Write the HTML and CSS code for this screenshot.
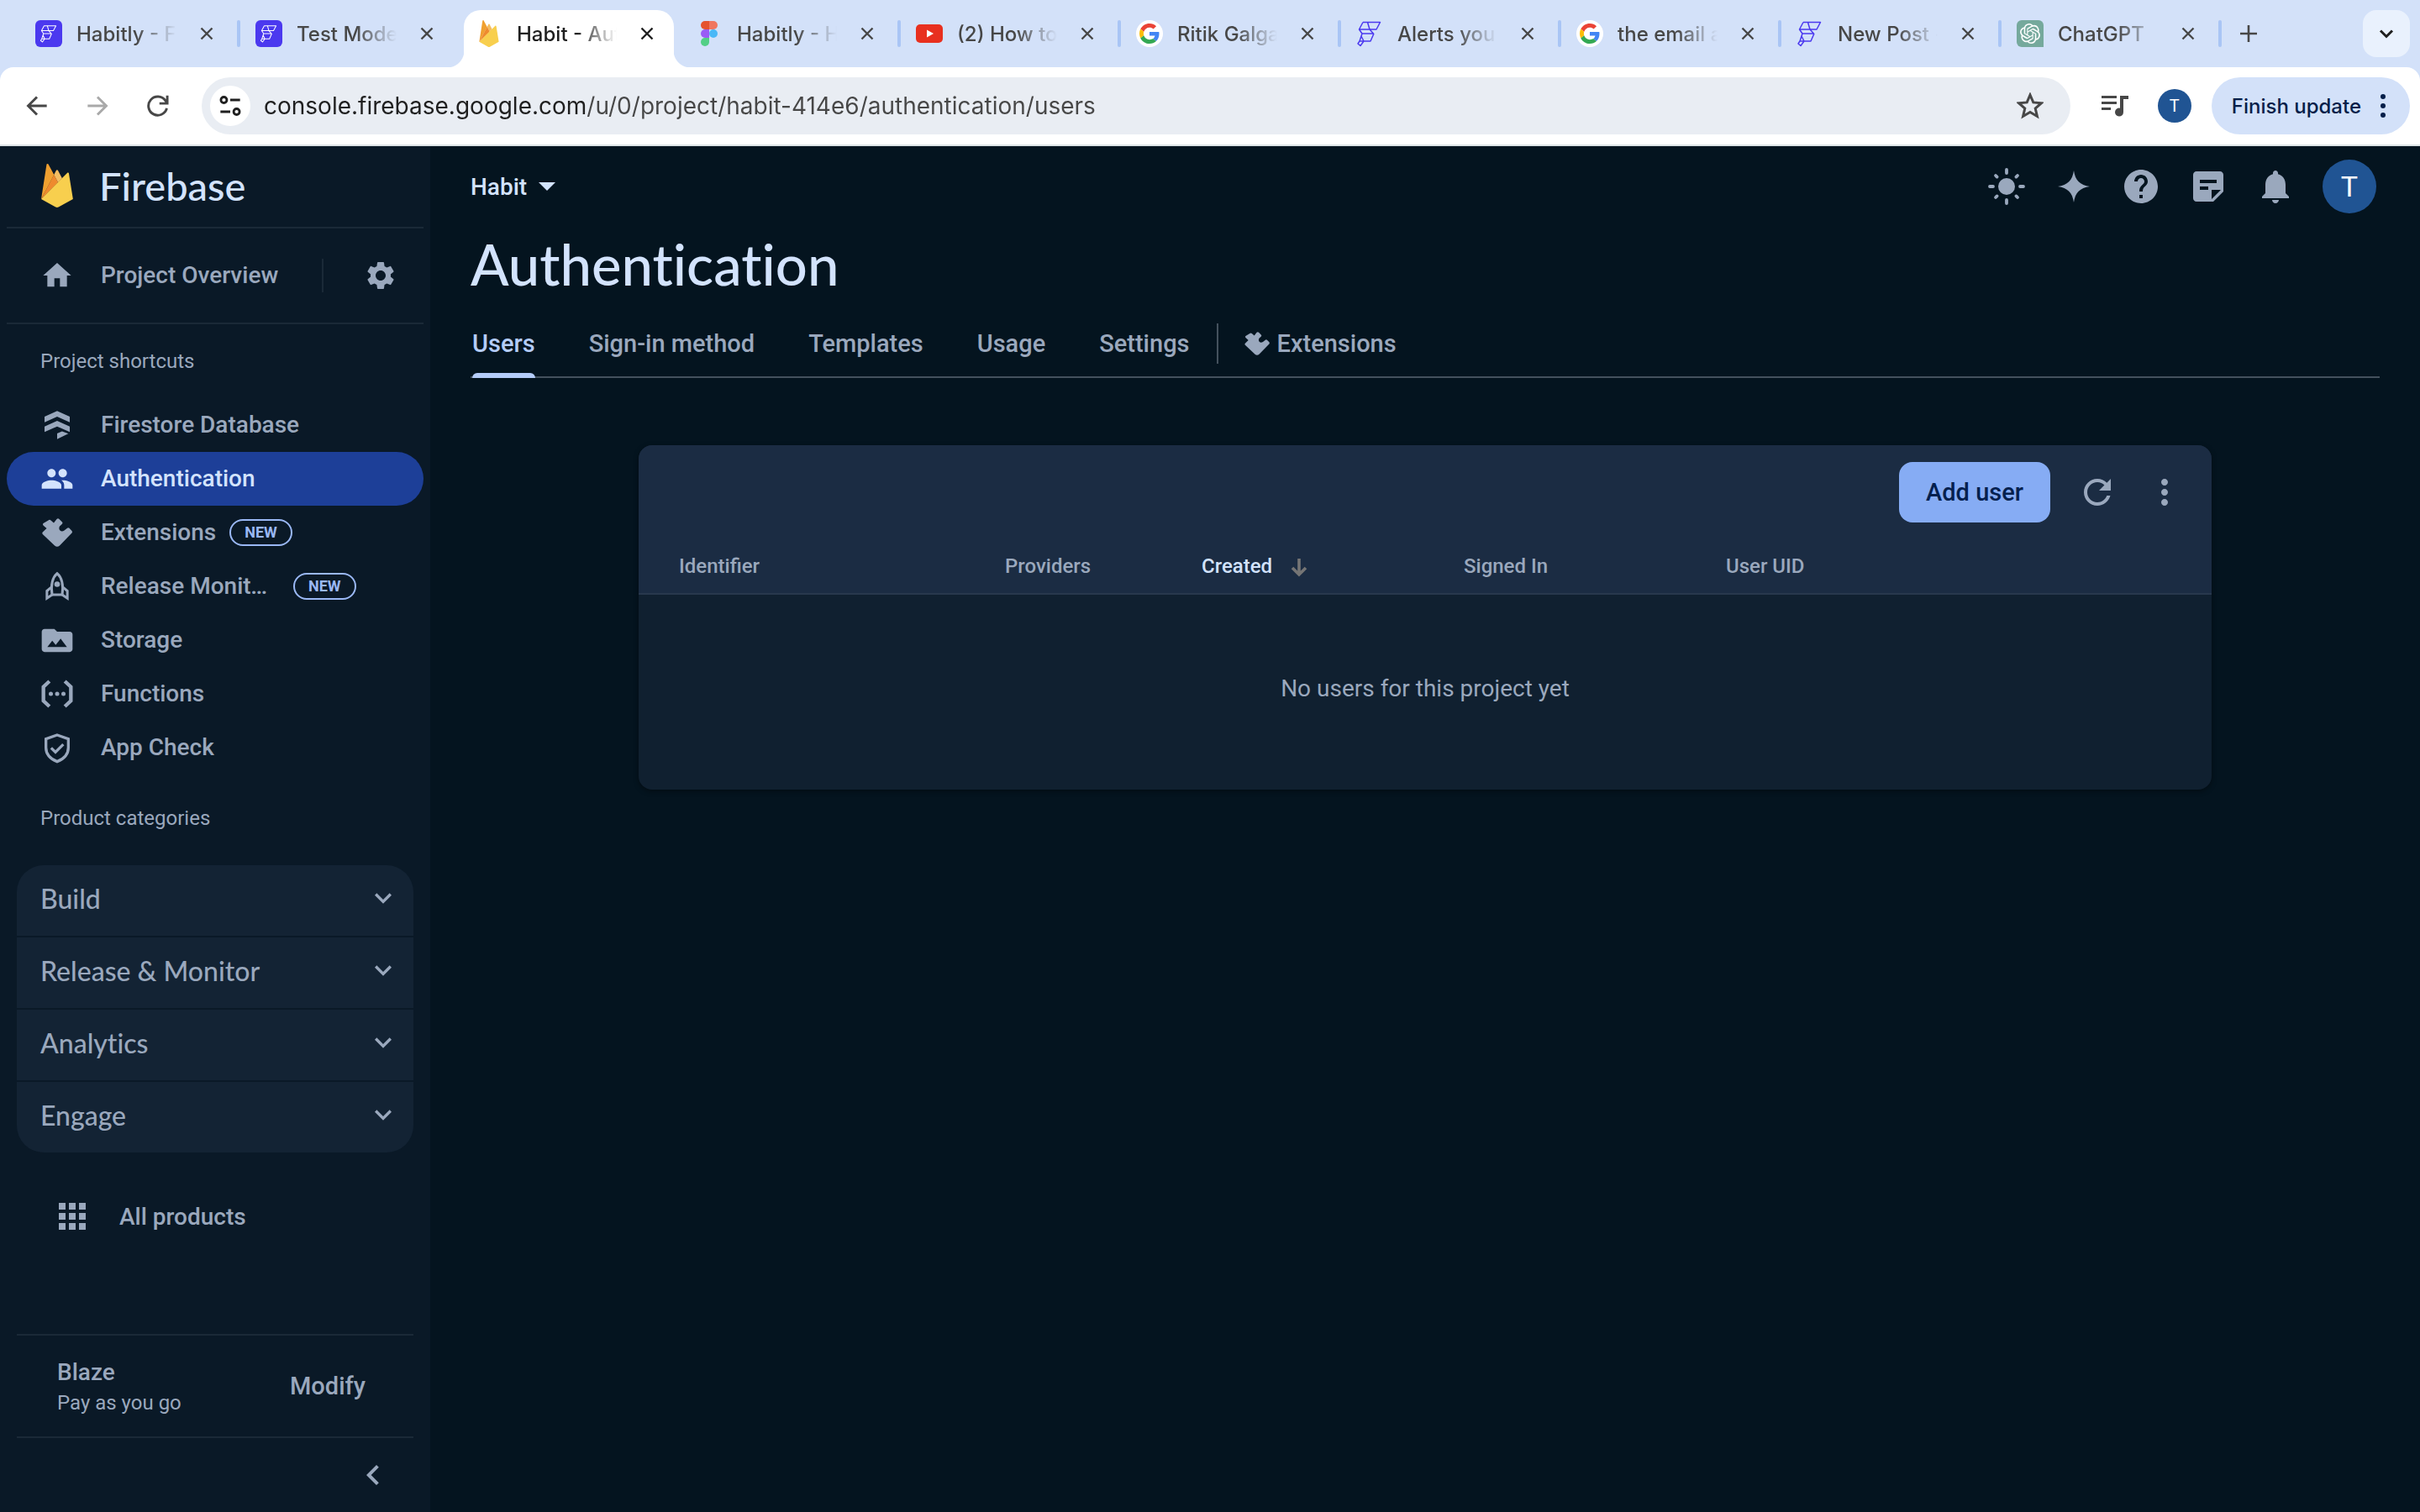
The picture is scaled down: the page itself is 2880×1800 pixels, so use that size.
FILE: index.html
```
<!DOCTYPE html>
<html lang="en">
<head>
    <meta charset="UTF-8">
    <meta name="viewport" content="width=device-width, initial-scale=1.0">
    <title>Habit - Authentication - Firebase console</title>
    <link rel="stylesheet" href="styles.css">
</head>
<body>
    <!-- Shared icon shapes -->
    <svg class="sprite" aria-hidden="true">
        <symbol id="i-close" viewBox="0 0 16 16"><path d="M1.5 1.5l13 13M14.5 1.5l-13 13" fill="none" stroke="currentColor" stroke-width="2.4"/></symbol>
        <symbol id="i-flutterflow" viewBox="0 0 32 32"><path d="M8 2.500H28.500L24 11H16L13.500 2.500M8 2.500L3.500 11H16L20.500 16H7L3.500 11M7 16L4 25H17L21 16M4 25L2 28 5 30.500 9 25 6 19" fill="none" stroke="currentColor" stroke-width="1.500" stroke-linejoin="round"/></symbol>
        <symbol id="i-firebase" viewBox="0 0 256 351">
            <path fill="#f0a030" d="M0 283l2.100-3L102.500 89.500l.2-2L58.500 4.400C54.800-2.600 44.300-.8 43.100 7z"/>
            <path fill="#f4bd62" d="M135 150.400l33-33.800-33-62.900c-3.100-6-11.900-6-15 0l-17.600 33.600v2.900z"/>
            <path fill="#ee8a2e" d="M0 283l1-1 3.500-1.400 128.400-128 1.700-4.400-32.100-61z"/>
            <path fill="#f8cf4e" d="M139.100 347.600l116.300-64.900L222.200 78.200c-1-6.400-8.900-8.900-13.500-4.300L0 283l115.600 64.500a24 24 0 0 0 23.500.1"/>
        </symbol>
        <symbol id="i-google" viewBox="0 0 48 48">
            <path fill="#ea4335" d="M24 9.500c3.540 0 6.710 1.220 9.210 3.600l6.850-6.850C35.900 2.380 30.470 0 24 0 14.620 0 6.510 5.380 2.560 13.220l7.980 6.190C12.430 13.720 17.740 9.500 24 9.500z"/>
            <path fill="#4285f4" d="M46.980 24.550c0-1.570-.15-3.090-.38-4.550H24v9.020h12.940c-.58 2.960-2.260 5.480-4.780 7.180l7.730 6c4.510-4.180 7.090-10.360 7.090-17.650z"/>
            <path fill="#fbbc05" d="M10.530 28.590c-.48-1.450-.76-2.990-.76-4.590s.27-3.140.76-4.590l-7.980-6.190C.92 16.460 0 20.120 0 24c0 3.880.92 7.540 2.560 10.780z"/>
            <path fill="#34a853" d="M24 48c6.480 0 11.930-2.130 15.890-5.810l-7.730-6c-2.150 1.450-4.920 2.300-8.160 2.300-6.260 0-11.570-4.220-13.470-9.910l-7.980 6.190C6.510 42.620 14.620 48 24 48z"/>
        </symbol>
        <symbol id="i-extension" viewBox="0 0 36 34"><path d="M7.500 2.500q1.500-1.300 3 0l3.500 3 3.500-4.500q1.500-1.500 3 0l3.500 3.500q1 1.300-.3 2.500l-2.700 2.500q-1.500 3 .5 5 2 2 5 0l3.500-2.800q1.300-1 2.500 0l3 3.300q1 1.300 0 2.500L21 32.500q-3 2.500-6 0L.8 19q-1-1.200 0-2.400L5.500 12 1.500 8.500q-1-1.200 0-2.400z"/></symbol>
        <symbol id="i-more" viewBox="0 0 24 24"><path d="M12 8c1.100 0 2-.9 2-2s-.9-2-2-2-2 .9-2 2 .9 2 2 2zm0 2c-1.100 0-2 .9-2 2s.9 2 2 2 2-.9 2-2-.9-2-2-2zm0 6c-1.100 0-2 .9-2 2s.9 2 2 2 2-.9 2-2-.9-2-2-2z"/></symbol>
        <symbol id="i-expand" viewBox="0 0 24 24"><path d="M16.590 8.590L12 13.170 7.410 8.590 6 10l6 6 6-6z"/></symbol>
    </svg>

    <div class="browser">
        <div class="tab-strip">
            <div class="tab">
                <span class="favicon favicon-purple"><svg><use href="#i-flutterflow"/></svg></span>
                <span class="tab-title">Habitly - FlutterFlow</span>
                <button class="tab-close" aria-label="Close tab"><svg><use href="#i-close"/></svg></button>
            </div>
            <div class="tab no-line">
                <span class="favicon favicon-purple"><svg><use href="#i-flutterflow"/></svg></span>
                <span class="tab-title">Test Mode</span>
                <button class="tab-close" aria-label="Close tab"><svg><use href="#i-close"/></svg></button>
            </div>
            <div class="tab active no-line">
                <span class="favicon"><svg><use href="#i-firebase"/></svg></span>
                <span class="tab-title">Habit - Authentication</span>
                <button class="tab-close" aria-label="Close tab"><svg><use href="#i-close"/></svg></button>
            </div>
            <div class="tab">
                <span class="favicon"><svg viewBox="0 0 32 32">
                    <path fill="#e5532d" d="M16 1h-5a5 5 0 0 0 0 10h5z"/>
                    <path fill="#f0765f" d="M16 1h5a5 5 0 0 1 0 10h-5z"/>
                    <path fill="#9a5cf5" d="M16 11h-5a5 5 0 0 0 0 10h5z"/>
                    <circle fill="#4ab8f7" cx="21" cy="16" r="5"/>
                    <path fill="#52cf86" d="M16 21h-5a5 5 0 1 0 5 5z"/>
                </svg></span>
                <span class="tab-title">Habitly - Habit</span>
                <button class="tab-close" aria-label="Close tab"><svg><use href="#i-close"/></svg></button>
            </div>
            <div class="tab">
                <span class="favicon"><svg viewBox="0 0 32 32"><rect fill="#e8301f" y="5" width="32" height="22" rx="5"/><path fill="#fff" d="M13 11.500l8 4.500-8 4.500z"/></svg></span>
                <span class="tab-title">(2) How to build</span>
                <button class="tab-close" aria-label="Close tab"><svg><use href="#i-close"/></svg></button>
            </div>
            <div class="tab">
                <span class="favicon favicon-round"><svg><use href="#i-google"/></svg></span>
                <span class="tab-title">Ritik Galgate</span>
                <button class="tab-close" aria-label="Close tab"><svg><use href="#i-close"/></svg></button>
            </div>
            <div class="tab">
                <span class="favicon favicon-plain"><svg><use href="#i-flutterflow"/></svg></span>
                <span class="tab-title">Alerts you</span>
                <button class="tab-close" aria-label="Close tab"><svg><use href="#i-close"/></svg></button>
            </div>
            <div class="tab">
                <span class="favicon favicon-round"><svg><use href="#i-google"/></svg></span>
                <span class="tab-title">the email address</span>
                <button class="tab-close" aria-label="Close tab"><svg><use href="#i-close"/></svg></button>
            </div>
            <div class="tab">
                <span class="favicon favicon-plain"><svg><use href="#i-flutterflow"/></svg></span>
                <span class="tab-title">New Post -</span>
                <button class="tab-close" aria-label="Close tab"><svg><use href="#i-close"/></svg></button>
            </div>
            <div class="tab">
                <span class="favicon favicon-gpt"><svg viewBox="0 0 24 24"><path d="M22.2819 9.8211a5.9847 5.9847 0 0 0-.5157-4.9108 6.0462 6.0462 0 0 0-6.5098-2.9A6.0651 6.0651 0 0 0 4.9807 4.1818a5.9847 5.9847 0 0 0-3.9977 2.9 6.0462 6.0462 0 0 0 .7427 7.0966 5.98 5.98 0 0 0 .511 4.9107 6.051 6.051 0 0 0 6.5146 2.9001A5.9847 5.9847 0 0 0 13.2599 24a6.0557 6.0557 0 0 0 5.7718-4.2058 5.9894 5.9894 0 0 0 3.9977-2.9001 6.0557 6.0557 0 0 0-.7475-7.0729zm-9.022 12.6081a4.4755 4.4755 0 0 1-2.8764-1.0408l.1419-.0804 4.7783-2.7582a.7948.7948 0 0 0 .3927-.6813v-6.7369l2.02 1.1686a.071.071 0 0 1 .038.052v5.5826a4.504 4.504 0 0 1-4.4945 4.4944zm-9.6607-4.1254a4.4708 4.4708 0 0 1-.5346-3.0137l.142.0852 4.783 2.7582a.7712.7712 0 0 0 .7806 0l5.8428-3.3685v2.3324a.0804.0804 0 0 1-.0332.0615L9.74 19.9502a4.4992 4.4992 0 0 1-6.1408-1.6464zM2.3408 7.8956a4.485 4.485 0 0 1 2.3655-1.9728V11.6a.7664.7664 0 0 0 .3879.6765l5.8144 3.3543-2.0201 1.1685a.0757.0757 0 0 1-.071 0l-4.8303-2.7865A4.504 4.504 0 0 1 2.3408 7.872zm16.5963 3.8558L13.1038 8.364 15.1192 7.2a.0757.0757 0 0 1 .071 0l4.8303 2.7913a4.4944 4.4944 0 0 1-.6765 8.1042v-5.6772a.79.79 0 0 0-.407-.667zm2.0107-3.0231l-.142-.0852-4.7735-2.7818a.7759.7759 0 0 0-.7854 0L9.409 9.2297V6.8974a.0662.0662 0 0 1 .0284-.0615l4.8303-2.7866a4.4992 4.4992 0 0 1 6.6802 4.66zM8.3065 12.863l-2.02-1.1638a.0804.0804 0 0 1-.038-.0567V6.0742a4.4992 4.4992 0 0 1 7.3757-3.4537l-.142.0805L8.704 5.459a.7948.7948 0 0 0-.3927.6813zm1.0976-2.3654l2.602-1.4998 2.6069 1.4998v2.9994l-2.5974 1.4997-2.6067-1.4997Z"/></svg></span>
                <span class="tab-title">ChatGPT</span>
                <button class="tab-close" aria-label="Close tab"><svg><use href="#i-close"/></svg></button>
            </div>
            <button class="new-tab" aria-label="New tab"><svg viewBox="0 0 20 20"><path d="M10 0v20M0 10h20" fill="none" stroke="currentColor" stroke-width="2.600"/></svg></button>
            <button class="tab-search" aria-label="Search tabs"><svg viewBox="0 0 24 24"><path d="M5 8.500l7 7 7-7" fill="none" stroke="currentColor" stroke-width="3"/></svg></button>
        </div>

        <div class="toolbar">
            <button class="tool" aria-label="Back"><svg viewBox="0 0 24 24"><path d="M22 12H3.500M12 3L3 12l9 9" fill="none" stroke="currentColor" stroke-width="2.500"/></svg></button>
            <button class="tool tool-off" aria-label="Forward"><svg viewBox="0 0 24 24"><path d="M2 12h18.500M12 3l9 9-9 9" fill="none" stroke="currentColor" stroke-width="2.500"/></svg></button>
            <button class="tool" aria-label="Reload"><svg viewBox="0 0 24 24"><path d="M21 14.500A9.500 9.500 0 1 1 19.500 6.500L21 8.500M21.500 1.500v8h-8" fill="none" stroke="currentColor" stroke-width="2.500"/></svg></button>
            <div class="omnibox">
                <button class="site-info" aria-label="Site information"><svg viewBox="0 0 24 24"><g fill="none" stroke="currentColor" stroke-width="2.400"><circle cx="5.500" cy="6" r="3"/><path d="M12 6h10M2 18h10"/><circle cx="18.500" cy="18" r="3"/></g></svg></button>
                <input class="url" type="text" aria-label="Address" value="console.firebase.google.com/u/0/project/habit-414e6/authentication/users">
                <button class="star" aria-label="Bookmark"><svg viewBox="0 0 32 32"><path d="M16 3l3.800 8.900 9.700.8-7.300 6.400 2.200 9.400-8.400-5-8.400 5 2.200-9.400-7.300-6.400 9.700-.8z" fill="none" stroke="currentColor" stroke-width="3"/></svg></button>
            </div>
            <button class="media" aria-label="Media"><svg viewBox="0 0 32 28"><path d="M0 3.500h18M0 10.500h18M0 17.500h11" fill="none" stroke="currentColor" stroke-width="3.200"/><path d="M22 2h10v4h-6v15.500a5 5 0 1 1-4-4.800z"/></svg></button>
            <button class="chrome-avatar" aria-label="Profile">T</button>
            <button class="update">Finish update <svg viewBox="0 0 8 28"><circle cx="4" cy="3" r="3"/><circle cx="4" cy="14" r="3"/><circle cx="4" cy="25" r="3"/></svg></button>
        </div>
    </div>

    <div class="console">
        <nav class="sidebar">
            <a class="brand" href="#">
                <svg><use href="#i-firebase"/></svg>
                <span>Firebase</span>
            </a>

            <div class="overview">
                <a class="nav-item" href="#">
                    <svg class="icon" viewBox="0 0 24 24"><path d="M10 20v-6h4v6h5v-8h3L12 3 2 12h3v8z"/></svg>
                    <span>Project Overview</span>
                </a>
                <button class="gear" aria-label="Project settings"><svg class="icon" viewBox="0 0 24 24"><path d="M19.140 12.940c.04-.3.060-.61.060-.94 0-.32-.02-.64-.07-.94l2.030-1.580c.18-.14.230-.41.120-.61l-1.920-3.320c-.12-.22-.37-.29-.59-.22l-2.390.96c-.5-.38-1.030-.7-1.620-.94l-.36-2.540c-.04-.24-.24-.41-.48-.41h-3.840c-.24 0-.43.17-.47.41l-.36 2.540c-.59.24-1.130.57-1.620.94l-2.390-.96c-.22-.08-.47 0-.59.22L2.740 8.870c-.12.21-.08.470.12.610l2.030 1.580c-.05.3-.09.630-.09.940s.02.640.07.940l-2.030 1.580c-.18.140-.23.410-.12.610l1.920 3.320c.12.220.370.290.590.220l2.390-.96c.5.380 1.030.7 1.620.940l.36 2.540c.05.240.240.410.480.410h3.840c.24 0 .44-.17.470-.41l.36-2.540c.59-.24 1.130-.56 1.620-.94l2.390.96c.22.080.470 0 .59-.22l1.920-3.320c.12-.22.070-.47-.12-.61zM12 15.600c-1.980 0-3.600-1.620-3.600-3.600s1.620-3.600 3.600-3.600 3.600 1.620 3.600 3.600-1.620 3.600-3.600 3.600z"/></svg></button>
            </div>

            <h2 class="section-label">Project shortcuts</h2>
            <a class="nav-item" href="#">
                <svg class="icon" viewBox="0 0 24 24"><path d="M12 2l9 4v4l-9-4-9 4V6zM12 9l9 4v4l-9-4-9 4v-4zM12 18l3.500-1.500L20 18.200 12 22z"/></svg>
                <span>Firestore Database</span>
            </a>
            <a class="nav-item selected" href="#">
                <svg class="icon" viewBox="0 0 24 24"><path d="M16 11c1.660 0 2.990-1.340 2.990-3S17.660 5 16 5c-1.660 0-3 1.340-3 3s1.340 3 3 3zm-8 0c1.660 0 2.990-1.340 2.990-3S9.660 5 8 5C6.340 5 5 6.340 5 8s1.340 3 3 3zm0 2c-2.330 0-7 1.170-7 3.500V19h14v-2.500c0-2.330-4.670-3.500-7-3.500zm8 0c-.29 0-.62.020-.97.050 1.160.84 1.970 1.970 1.970 3.450V19h6v-2.500c0-2.330-4.670-3.500-7-3.500z"/></svg>
                <span>Authentication</span>
            </a>
            <a class="nav-item" href="#">
                <svg class="icon icon-ext"><use href="#i-extension"/></svg>
                <span>Extensions</span>
                <em class="badge">NEW</em>
            </a>
            <a class="nav-item" href="#">
                <svg class="icon" viewBox="0 0 24 24"><g fill="none" stroke="currentColor" stroke-width="1.800"><path d="M12 2.800c-3.500 3-4.600 8-3.600 15.200h7.200C16.600 10.800 15.500 5.800 12 2.800z"/><path d="M8 12.500l-3.300 2.800v5.200l3.700-2.500M16 12.500l3.300 2.800v5.200l-3.700-2.500"/></g><circle cx="12" cy="10.500" r="2"/></svg>
                <span class="cut">Release Monitoring</span>
                <em class="badge">NEW</em>
            </a>
            <a class="nav-item" href="#">
                <svg class="icon" viewBox="0 0 24 24"><path d="M21 6h-9l-2-2H3c-1.100 0-2 .9-2 2v12.500c0 1.100.9 2 2 2h18c1.100 0 2-.9 2-2V8c0-1.100-.9-2-2-2zM5 17l3.500-4.500 2.500 3 3.500-4.500 4.500 6z"/></svg>
                <span>Storage</span>
            </a>
            <a class="nav-item" href="#">
                <svg class="icon" viewBox="0 0 24 24"><path d="M6.500 3L2.200 7v10l4.300 4M17.500 3l4.300 4v10l-4.300 4" fill="none" stroke="currentColor" stroke-width="2.600"/><circle cx="7.500" cy="12" r="1.500"/><circle cx="12" cy="12" r="1.500"/><circle cx="16.500" cy="12" r="1.500"/></svg>
                <span>Functions</span>
            </a>
            <a class="nav-item" href="#">
                <svg class="icon" viewBox="0 0 24 24"><g fill="none" stroke="currentColor" stroke-width="2"><path d="M12 3l8 2.800v6.200c0 4.600-3 8-8 10-5-2-8-5.400-8-10V5.800z"/><path d="M7.700 12.200l3.100 3.100 5.600-5.600"/></g></svg>
                <span>App Check</span>
            </a>

            <h2 class="section-label">Product categories</h2>
            <div class="categories">
                <button class="category">Build <svg class="icon"><use href="#i-expand"/></svg></button>
                <button class="category">Release &amp; Monitor <svg class="icon"><use href="#i-expand"/></svg></button>
                <button class="category">Analytics <svg class="icon"><use href="#i-expand"/></svg></button>
                <button class="category">Engage <svg class="icon"><use href="#i-expand"/></svg></button>
            </div>

            <a class="all-products" href="#">
                <svg viewBox="0 0 24 24"><path d="M4 8h4V4H4v4zm6 12h4v-4h-4v4zm-6 0h4v-4H4v4zm0-6h4v-4H4v4zm6 0h4v-4h-4v4zm6-10v4h4V4h-4zm-6 4h4V4h-4v4zm6 6h4v-4h-4v4zm0 6h4v-4h-4v4z"/></svg>
                <span>All products</span>
            </a>

            <div class="plan">
                <div>
                    <p class="plan-name">Blaze</p>
                    <p class="plan-note">Pay as you go</p>
                </div>
                <button class="modify">Modify</button>
            </div>
            <div class="collapse">
                <button aria-label="Collapse menu"><svg viewBox="0 0 24 24"><path d="M15.410 7.410L14 6l-6 6 6 6 1.410-1.410L10.830 12z"/></svg></button>
            </div>
        </nav>

        <main class="main">
            <header class="topbar">
                <button class="project">Habit <svg viewBox="0 0 20 10"><path d="M0 0h20L10 10z"/></svg></button>
                <div class="top-icons">
                    <button aria-label="Theme"><svg viewBox="0 0 24 24"><circle cx="12" cy="12" r="5"/><path d="M12 2v2M12 20v2M2 12h2M20 12h2M5.500 5.500l.8.8M17.700 17.700l.8.8M5.500 18.500l.8-.8M17.700 6.300l.8-.8" fill="none" stroke="currentColor" stroke-width="1.900" stroke-linecap="round"/></svg></button>
                    <button aria-label="Gemini"><svg viewBox="0 0 24 24"><path d="M12 2.500c.8 5.800 3.700 8.700 9.500 9.500-5.800.8-8.700 3.700-9.500 9.500-.8-5.800-3.700-8.700-9.500-9.500 5.800-.8 8.700-3.700 9.500-9.500z"/></svg></button>
                    <button aria-label="Help"><svg viewBox="0 0 24 24"><path d="M12 2C6.480 2 2 6.480 2 12s4.480 10 10 10 10-4.480 10-10S17.520 2 12 2zm1 17h-2v-2h2v2zm2.070-7.750l-.9.920C13.450 12.900 13 13.500 13 15h-2v-.5c0-1.100.45-2.100 1.170-2.830l1.240-1.260c.37-.36.590-.86.590-1.410 0-1.100-.9-2-2-2s-2 .9-2 2H8c0-2.210 1.790-4 4-4s4 1.790 4 4c0 .88-.36 1.680-.93 2.250z"/></svg></button>
                    <button aria-label="Release notes"><svg viewBox="0 0 24 24"><path fill-rule="evenodd" d="M5 3h14c1.100 0 2 .9 2 2v10l-6 6H5c-1.100 0-2-.9-2-2V5c0-1.100.9-2 2-2zm2 5v2h10V8zm0 4v2h5v-2zm7 7.500L19.500 14H14z"/></svg></button>
                    <button aria-label="Notifications"><svg viewBox="0 0 24 24"><path d="M12 22c1.100 0 2-.9 2-2h-4c0 1.100.9 2 2 2zm6-6v-5c0-3.070-1.630-5.640-4.500-6.320V4c0-.83-.67-1.500-1.500-1.500s-1.500.67-1.500 1.500v.68C7.640 5.360 6 7.920 6 11v5l-2 2v1h16v-1z"/></svg></button>
                    <button class="account" aria-label="Account">T</button>
                </div>
            </header>

            <h1 class="page-title">Authentication</h1>

            <div class="page-tabs">
                <a class="page-tab current" href="#">Users</a>
                <a class="page-tab" href="#">Sign-in method</a>
                <a class="page-tab" href="#">Templates</a>
                <a class="page-tab" href="#">Usage</a>
                <a class="page-tab" href="#">Settings</a>
                <a class="page-tab ext-tab" href="#"><svg><use href="#i-extension"/></svg>Extensions</a>
            </div>

            <section class="card">
                <div class="card-actions">
                    <button class="add-user">Add user</button>
                    <button class="card-icon" aria-label="Refresh"><svg viewBox="0 0 24 24"><path d="M17.650 6.350C16.200 4.900 14.210 4 12 4c-4.420 0-7.990 3.580-7.990 8s3.570 8 7.990 8c3.730 0 6.840-2.550 7.730-6h-2.080c-.82 2.330-3.040 4-5.650 4-3.310 0-6-2.690-6-6s2.690-6 6-6c1.660 0 3.140.69 4.220 1.780L13 11h7V4z"/></svg></button>
                    <button class="card-icon" aria-label="More options"><svg><use href="#i-more"/></svg></button>
                </div>
                <table class="users">
                    <colgroup>
                        <col class="col-id">
                        <col class="col-providers">
                        <col class="col-date">
                        <col class="col-date">
                        <col>
                    </colgroup>
                    <thead>
                        <tr>
                            <th>Identifier</th>
                            <th>Providers</th>
                            <th class="sorted">Created <svg viewBox="0 0 20 22"><path d="M10 0v19M2 11l8 8 8-8" fill="none" stroke="currentColor" stroke-width="3.600"/></svg></th>
                            <th>Signed In</th>
                            <th>User UID</th>
                        </tr>
                    </thead>
                    <tbody>
                        <tr>
                            <td colspan="5">No users for this project yet</td>
                        </tr>
                    </tbody>
                </table>
            </section>
        </main>
    </div>
</body>
</html>
```

FILE: styles.css
```
* {
    margin: 0;
    padding: 0;
    box-sizing: border-box;
}

body {
    font-family: Roboto, sans-serif;
    font-size: 28px;
    background: #04141f;
    color: #9aa8bd;
    min-height: 100vh;
    display: flex;
    flex-direction: column;
}

button {
    font: inherit;
    color: inherit;
    background: none;
    border: none;
    cursor: pointer;
    display: flex;
    align-items: center;
    justify-content: center;
}

a {
    color: inherit;
    text-decoration: none;
}

svg {
    display: block;
    fill: currentColor;
    flex-shrink: 0;
}

.sprite {
    display: none;
}

/* Browser window */
.browser {
    font-family: Inter, sans-serif;
    background: #d3e1f9;
    color: #474747;
}

.tab-strip {
    height: 80px;
    padding: 0 12px 0 22px;
    display: flex;
    align-items: center;
}

.tab {
    flex: 0 1 262px;
    min-width: 0;
    height: 80px;
    padding: 0 30px 0 20px;
    display: flex;
    align-items: center;
    gap: 17px;
    position: relative;
    font-size: 24px;
    font-weight: 500;
}

.tab::after {
    content: "";
    position: absolute;
    right: -2px;
    top: 24px;
    width: 4px;
    height: 32px;
    border-radius: 2px;
    background: #a9c5f5;
}

.tab.no-line::after {
    display: none;
}

.tab.active {
    color: #1f1f1f;
}

/* White shape of the open tab, flared at the foot */
.tab.active::before,
.tab.active::after {
    content: "";
    display: block;
    position: absolute;
    z-index: 0;
}

.tab.active::before {
    left: 6px;
    right: 6px;
    top: 12px;
    bottom: 0;
    width: auto;
    height: auto;
    background: #fff;
    border-radius: 20px 20px 0 0;
}

.tab.active::after {
    left: -14px;
    right: -14px;
    top: 60px;
    width: auto;
    height: 20px;
    border-radius: 0;
    background:
        radial-gradient(circle at 0 0, transparent 20px, #fff 21px) left / 20px 20px no-repeat,
        radial-gradient(circle at 100% 0, transparent 20px, #fff 21px) right / 20px 20px no-repeat;
}

.tab > * {
    position: relative;
    z-index: 1;
}

.favicon {
    width: 32px;
    height: 32px;
    flex-shrink: 0;
}

.favicon svg {
    width: 100%;
    height: 100%;
}

.favicon-purple {
    background: #4b39ef;
    color: #fff;
    border-radius: 6px;
    padding: 5px;
}

.favicon-plain {
    color: #4b39ef;
}

.favicon-round {
    background: #fff;
    border-radius: 50%;
    padding: 4px;
}

.favicon-gpt {
    background: #75a99c;
    color: #fff;
    border-radius: 6px 6px 0 6px;
    padding: 4px;
}

.tab-title {
    flex: 1;
    overflow: hidden;
    white-space: nowrap;
    -webkit-mask-image: linear-gradient(to left, transparent, #000 48px);
    mask-image: linear-gradient(to left, transparent, #000 48px);
}

.tab-close svg {
    width: 16px;
    height: 16px;
}

.tab-close {
    margin-left: 11px;
}

.new-tab {
    margin-left: 24px;
}

.new-tab svg {
    width: 20px;
    height: 20px;
}

.tab-search {
    margin-left: auto;
    width: 56px;
    height: 56px;
    border-radius: 16px;
    background: #e9f1fd;
    color: #1f1f1f;
}

.tab-search svg {
    width: 24px;
    height: 24px;
}

.toolbar {
    height: 94px;
    padding: 0 12px 0 32px;
    background: #fff;
    border-bottom: 2px solid #dde3e6;
    border-radius: 16px 16px 0 0;
    display: flex;
    align-items: center;
}

.tool {
    width: 24px;
    margin-right: 48px;
}

.tool svg {
    width: 28px;
    height: 28px;
}

.tool-off {
    color: #a9a9a9;
}

.omnibox {
    flex: 1;
    height: 68px;
    margin-left: -8px;
    padding: 0 32px 0 10px;
    border-radius: 34px;
    background: #e9edf3;
    display: flex;
    align-items: center;
    gap: 16px;
}

.site-info {
    width: 48px;
    height: 48px;
    border-radius: 50%;
    background: #fff;
    color: #1f1f1f;
}

.site-info svg {
    width: 28px;
    height: 28px;
}

/* Domain part darker than the path */
.url {
    flex: 1;
    font: inherit;
    font-size: 28px;
    border: none;
    outline: none;
    color: transparent;
    background: linear-gradient(to right, #1f1f1f 383px, #474747 383px);
    -webkit-background-clip: text;
    background-clip: text;
}

.star svg {
    width: 32px;
    height: 32px;
}

.media {
    margin-left: 37px;
}

.media svg {
    width: 32px;
    height: 28px;
}

.chrome-avatar {
    width: 40px;
    height: 40px;
    margin: 0 24px 0 35px;
    border-radius: 50%;
    background: #205493;
    color: #fff;
    font-family: Roboto, sans-serif;
    font-size: 20px;
}

.update {
    height: 68px;
    padding: 0 28px 0 24px;
    gap: 22px;
    border-radius: 34px;
    background: #d3e1f9;
    color: #041e49;
    font-size: 24px;
    font-weight: 500;
}

.update svg {
    width: 8px;
    height: 28px;
}

/* Console layout */
.console {
    flex: 1;
    display: flex;
}

.sidebar {
    width: 512px;
    flex-shrink: 0;
    background: #0a1927;
    font-weight: 500;
    display: flex;
    flex-direction: column;
}

.brand,
.category,
.page-title {
    font-family: Lato, sans-serif;
    font-variant-ligatures: none;
}

.brand {
    height: 98px;
    margin: 0 8px;
    padding: 0 40px 2px;
    border-bottom: 2px solid #1a2937;
    display: flex;
    align-items: center;
    gap: 30px;
    color: #d3e3fd;
    font-size: 47px;
    font-weight: 500;
}

.brand svg {
    width: 40px;
    height: 52px;
}

.overview {
    height: 114px;
    margin: 0 8px 24px;
    border-bottom: 2px solid #1a2937;
    display: flex;
    align-items: center;
}

.overview .nav-item {
    flex: 1;
    margin: 0;
}

.gear {
    width: 121px;
    height: 40px;
    padding-left: 16px;
    border-left: 2px solid #1a2937;
}

.icon {
    width: 40px;
    height: 40px;
}

.icon-ext {
    padding: 2px;
}

.section-label {
    padding: 0 48px;
    line-height: 40px;
    font-size: 24px;
    font-weight: 400;
    margin-bottom: 24px;
}

.nav-item {
    height: 64px;
    margin: 0 8px;
    padding: 0 40px;
    border-radius: 32px;
    display: flex;
    align-items: center;
    white-space: nowrap;
}

.nav-item .icon {
    margin-right: 32px;
}

.nav-item span {
    padding-bottom: 2px;
}

.nav-item.selected {
    background: #1d3f98;
    color: #d3e3fd;
}

.nav-item .cut {
    width: 213px;
    overflow: hidden;
    text-overflow: ellipsis;
}

.badge {
    margin-left: 16px;
    padding: 0 16px;
    border: 2px solid #9ab8f5;
    border-radius: 16px;
    color: #9ab8f5;
    font-size: 18px;
    font-style: normal;
    font-weight: 700;
    line-height: 28px;
}

.nav-item + .section-label {
    margin: 32px 0 36px;
}

.categories {
    margin: 0 20px;
    border-radius: 32px;
    overflow: hidden;
    display: flex;
    flex-direction: column;
    gap: 2px;
}

.category {
    height: 84px;
    padding: 0 16px 6px 28px;
    justify-content: space-between;
    background: #132334;
    font-size: 32px;
}

.all-products {
    margin: 44px 8px;
    height: 64px;
    padding-left: 54px;
    display: flex;
    align-items: center;
    gap: 32px;
}

.all-products svg {
    width: 48px;
    height: 48px;
}

.plan {
    height: 124px;
    margin: auto 20px 0;
    padding: 0 57px 0 48px;
    border-top: 2px solid #1a2937;
    border-bottom: 2px solid #1a2937;
    display: flex;
    align-items: center;
    justify-content: space-between;
}

.plan-name {
    line-height: 40px;
}

.plan-note {
    font-size: 24px;
    font-weight: 400;
    line-height: 32px;
}

.modify {
    font-size: 29px;
    font-weight: 500;
}

.collapse {
    height: 88px;
    padding-right: 44px;
    display: flex;
    align-items: center;
    justify-content: flex-end;
}

.collapse svg {
    width: 48px;
    height: 48px;
}

.main {
    flex: 1;
    padding: 0 48px;
}

.topbar {
    height: 96px;
    display: flex;
    align-items: center;
    justify-content: space-between;
}

.project {
    gap: 14px;
    color: #d3e3fd;
    font-weight: 500;
}

.project svg {
    width: 20px;
    height: 10px;
}

.top-icons {
    display: flex;
    align-items: center;
    gap: 32px;
    padding-right: 4px;
}

.top-icons svg {
    width: 48px;
    height: 48px;
}

.top-icons .account {
    width: 64px;
    height: 64px;
    border-radius: 50%;
    background: #205493;
    color: #fff;
    font-size: 34px;
}

.page-title {
    color: #d3e3fd;
    font-size: 67px;
    font-weight: 500;
    line-height: 88px;
}

.page-tabs {
    height: 92px;
    border-bottom: 2px solid #44515d;
    padding: 12px 0 0 2px;
    display: flex;
    align-items: center;
    gap: 64px;
    font-size: 29px;
    font-weight: 500;
}

.page-tab {
    height: 78px;
    line-height: 78px;
    position: relative;
}

.page-tab.current {
    color: #b4ccf8;
}

.page-tab.current::after {
    content: "";
    position: absolute;
    left: 0;
    right: 0;
    bottom: -2px;
    height: 6px;
    border-radius: 6px 6px 0 0;
    background: #b4ccf8;
}

.ext-tab {
    height: 48px;
    line-height: 48px;
    margin-left: -32px;
    padding-left: 31px;
    border-left: 2px solid #44515d;
    display: flex;
    align-items: center;
    gap: 9px;
}

.ext-tab svg {
    width: 30px;
    height: 28px;
}

.card {
    max-width: 1872px;
    margin: 80px auto;
    border-radius: 16px;
    overflow: hidden;
    background: #102030;
    box-shadow: 0 2px 6px rgba(0, 0, 0, 0.4);
}

.card-actions {
    height: 112px;
    padding: 0 32px;
    background: #1b2c43;
    display: flex;
    align-items: center;
    justify-content: flex-end;
    gap: 32px;
}

.add-user {
    height: 72px;
    padding: 0 32px;
    border-radius: 16px;
    background: #86acf4;
    color: #04204e;
    font-size: 29px;
    font-weight: 500;
}

.card-icon svg {
    width: 48px;
    height: 48px;
}

.users {
    width: 100%;
    table-layout: fixed;
    border-collapse: separate;
    border-spacing: 0;
}

.col-id {
    width: 436px;
}

.col-providers {
    width: 234px;
}

.col-date {
    width: 312px;
}

.users th {
    height: 66px;
    border-bottom: 2px solid #28384d;
    background: #1b2c43;
    font-size: 24px;
    font-weight: 500;
    text-align: left;
}

.users th:first-child {
    padding-left: 48px;
}

.users .sorted {
    color: #d3e3fd;
}

.sorted svg {
    display: inline-block;
    width: 20px;
    height: 22px;
    margin-left: 16px;
    vertical-align: middle;
    color: #757575;
}

.users td {
    height: 232px;
    padding-bottom: 10px;
    text-align: center;
}
```
